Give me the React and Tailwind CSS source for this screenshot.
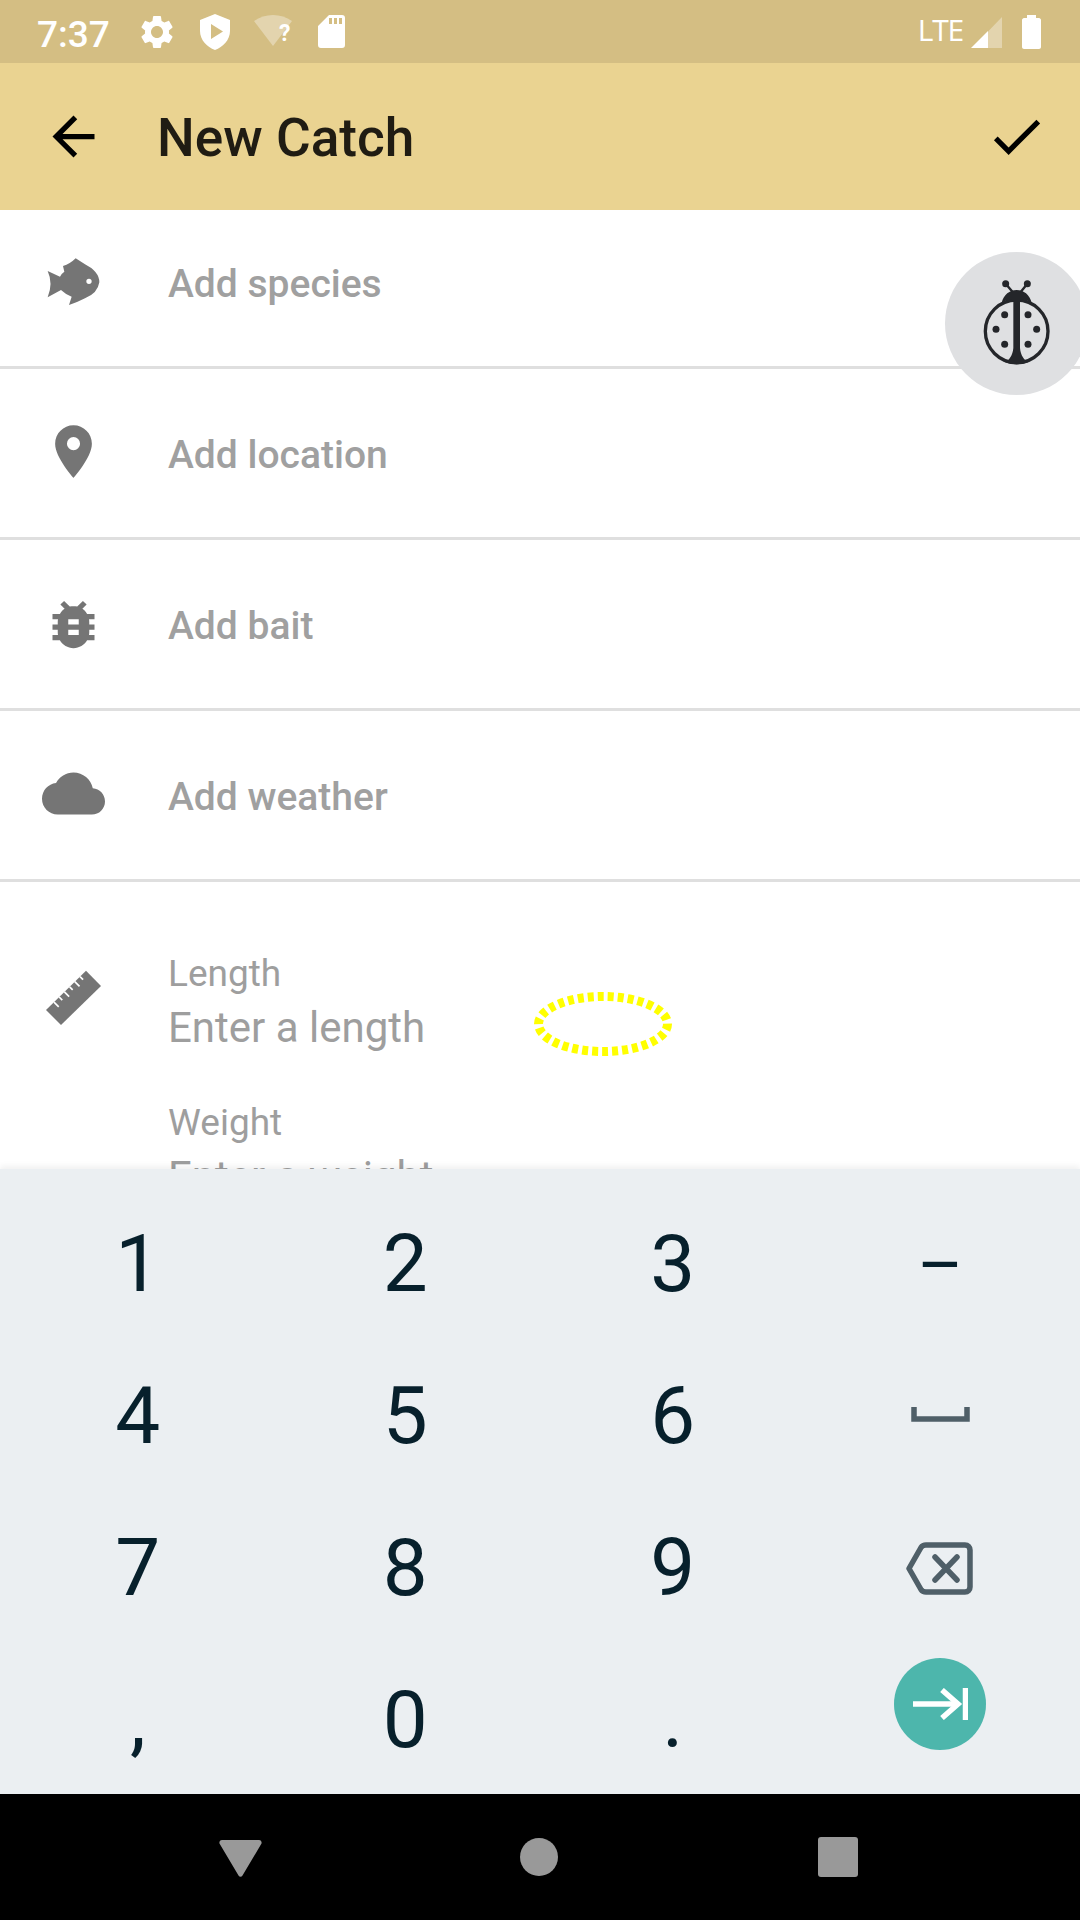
import React from "react";

const roboto = "font-['Roboto',sans-serif]";

function Gear() {
  return (
    <svg viewBox="0 0 24 24" className="w-[40px] h-[40px] ml-[-4px]" fill="#fff">
      <path d="M19.14 12.94c.04-.3.06-.61.06-.94 0-.32-.02-.64-.07-.94l2.03-1.58c.18-.14.23-.41.12-.61l-1.92-3.32c-.12-.22-.37-.29-.59-.22l-2.39.96c-.5-.38-1.03-.7-1.62-.94l-.36-2.54c-.04-.24-.24-.41-.48-.41h-3.84c-.24 0-.43.17-.47.41l-.36 2.54c-.59.24-1.13.57-1.62.94l-2.39-.96c-.22-.08-.47 0-.59.22L2.74 8.87c-.12.21-.08.47.12.61l2.03 1.58c-.05.3-.09.63-.09.94s.02.64.07.94l-2.03 1.58c-.18.14-.23.41-.12.61l1.92 3.32c.12.22.37.29.59.22l2.39-.96c.5.38 1.03.7 1.62.94l.36 2.54c.05.24.24.41.48.41h3.84c.24 0 .44-.17.47-.41l.36-2.54c.59-.24 1.13-.56 1.62-.94l2.39.96c.22.08.47 0 .59-.22l1.92-3.32c.12-.22.07-.47-.12-.61l-2.01-1.58zM12 15.6c-1.98 0-3.6-1.62-3.6-3.6s1.62-3.6 3.6-3.6 3.6 1.62 3.6 3.6-1.62 3.6-3.6 3.6z" />
    </svg>
  );
}

function Shield() {
  return (
    <svg viewBox="0 0 30 36" className="w-[30px] h-[36px]" fill="#fff">
      <path
        fillRule="evenodd"
        d="M15 0 L30 6 V17 C30 26 23 33 15 36 C7 33 0 26 0 17 V6 Z M11 10 V25 L23 17.5 Z"
      />
    </svg>
  );
}

function Wifi() {
  return (
    <div className="relative w-[40px] h-[34px]">
      <svg viewBox="0 0 40 34" className="w-[40px] h-[34px]" fill="#fff" fillOpacity="0.35">
        <path d="M0 7 C11 -1 27 -1 38 7 L19 32 Z" />
      </svg>
      <span className={`absolute left-[25px] top-[7px] text-[23px] leading-[26px] font-bold text-white ${roboto}`}>?</span>
    </div>
  );
}

function Sd() {
  return (
    <svg viewBox="0 0 27 33" className="w-[27px] h-[33px]" fill="#fff">
      <path
        fillRule="evenodd"
        d="M11 0 H24 C26 0 27 1 27 3 V30 C27 32 26 33 24 33 H3 C1 33 0 32 0 30 V11 Z M11 3 V9 H14 V3 Z M16 3 V9 H19 V3 Z M21 3 V9 H24 V3 Z"
      />
    </svg>
  );
}

function StatusBar() {
  return (
    <div className="h-[63px] shrink-0 bg-[#d4be83] flex items-center pl-[37px] pr-[39px] text-white">
      <span className={`text-[37px] font-medium leading-none w-[104px] mt-[6px] ${roboto}`}>7:37</span>
      <div className="flex items-center">
        <Gear />
        <div className="ml-[23px] mt-[1px]"><Shield /></div>
        <div className="ml-[24px] mt-[-1px]"><Wifi /></div>
        <div className="ml-[24px]"><Sd /></div>
      </div>
      <div className="ml-auto flex items-center">
        <span className="font-['Open_Sans',sans-serif] text-[30px] leading-none tracking-[-1.2px] mt-[-4px]">LTE</span>
        <svg viewBox="0 0 31 31" className="w-[31px] h-[31px] ml-[8px] mt-[1px]">
          <path d="M17 14.5 L31 0 V31 H17 Z" fill="#fff" fillOpacity="0.35" />
          <path d="M0 31 L17 14 V31 Z" fill="#fff" />
        </svg>
        <svg viewBox="0 0 19 34" className="w-[19px] h-[34px] ml-[20px]" fill="#fff">
          <path d="M5 0 H14 V3 H17 C18 3 19 4 19 5 V32 C19 33 18 34 17 34 H2 C1 34 0 33 0 32 V5 C0 4 1 3 2 3 H5 Z" />
        </svg>
      </div>
    </div>
  );
}

function Toolbar() {
  return (
    <div className="h-[147px] shrink-0 bg-[#ead391] flex items-center pl-[42px] pr-[32px]">
      <svg viewBox="0 0 24 24" className="w-[63px] h-[63px]" fill="#000">
        <path d="M20 11H7.83l5.59-5.59L12 4l-8 8 8 8 1.41-1.41L7.83 13H20v-2z" />
      </svg>
      <span className={`ml-[52px] mt-[5px] text-[53.2px] leading-none font-medium text-[#201c13] ${roboto}`}>New Catch</span>
      <svg viewBox="0 0 24 24" className="ml-auto w-[63px] h-[63px]" fill="#000">
        <path d="M9 16.17L4.83 12l-1.42 1.41L9 19 21 7l-1.41-1.41z" />
      </svg>
    </div>
  );
}

function Fish() {
  return (
    <svg viewBox="0 0 240 195" className="w-[80px] h-[65px]" fill="#757575">
      <path
        fillRule="evenodd"
        d="M38 63 L75 80 Q80 70 88 65 L84 48 Q105 42 122 25 L150 43 Q193 65 193 97 Q188 130 150 145 Q125 158 102 165 L110 140 Q90 132 78 120 L38 142 Q55 100 38 63 Z M162 86 A8 8 0 1 0 162 102 A8 8 0 1 0 162 86 Z"
      />
    </svg>
  );
}

function Pin() {
  return (
    <svg viewBox="0 0 24 24" className="w-[63px] h-[63px] mt-[-3px]" fill="#757575">
      <path d="M12 2C8.13 2 5 5.13 5 9c0 5.25 7 13 7 13s7-7.75 7-13c0-3.87-3.13-7-7-7zm0 9.5a2.5 2.5 0 0 1 0-5 2.5 2.5 0 0 1 0 5z" />
    </svg>
  );
}

function Bug() {
  return (
    <svg viewBox="0 0 24 24" className="w-[63px] h-[63px]" fill="#757575">
      <path d="M20 8h-2.81c-.45-.78-1.07-1.45-1.82-1.96L17 4.41 15.59 3l-2.17 2.17C12.96 5.06 12.49 5 12 5c-.49 0-.96.06-1.41.17L8.41 3 7 4.41l1.62 1.63C7.88 6.55 7.26 7.22 6.81 8H4v2h2.09c-.05.33-.09.66-.09 1v1H4v2h2v1c0 .34.04.67.09 1H4v2h2.81c1.04 1.79 2.97 3 5.19 3s4.15-1.21 5.19-3H20v-2h-2.09c.05-.33.09-.66.09-1v-1h2v-2h-2v-1c0-.34-.04-.67-.09-1H20V8zm-6 8h-4v-2h4v2zm0-4h-4v-2h4v2z" />
    </svg>
  );
}

function Cloud() {
  return (
    <svg viewBox="0 0 24 24" className="w-[63px] h-[63px] mt-[-3px]" fill="#757575">
      <path d="M19.35 10.04C18.67 6.59 15.64 4 12 4 9.11 4 6.6 5.64 5.35 8.04 2.34 8.36 0 10.91 0 14c0 3.31 2.69 6 6 6h13c2.76 0 5-2.24 5-5 0-2.64-2.05-4.78-4.65-4.96z" />
    </svg>
  );
}

function Ruler() {
  const ticks = [
    [0.2, 20],
    [0.33, 13],
    [0.46, 20],
    [0.59, 13],
    [0.72, 20],
    [0.85, 13],
  ];
  return (
    <svg viewBox="0 0 225 225" className="w-[75px] h-[75px]">
      <path d="M150 32 L195 78 L75 195 L30 150 Z" fill="#757575" />
      {ticks.map(([t, l], i) => {
        const x = 30 + 120 * t;
        const y = 150 - 118 * t;
        return <line key={i} x1={x} y1={y} x2={x + l * 0.71} y2={y + l * 0.71} stroke="#fff" strokeWidth="5" />;
      })}
    </svg>
  );
}

function Row({ icon, label, first }) {
  return (
    <div className={`${first ? "h-[159px] pb-[12px]" : "h-[171px]"} shrink-0 border-b-[3px] border-[#dfdfdf] flex items-center relative`}>
      <div className="w-[147px] shrink-0 flex items-center justify-center mr-[21px]">{icon}</div>
      <span className={`text-[39px] leading-none mt-[4px] font-medium text-[#a0a0a0] ${roboto}`}>{label}</span>
    </div>
  );
}

function Field({ label, placeholder }) {
  return (
    <div className="flex flex-col">
      <span className={`text-[37px] leading-[40px] text-[#9e9e9e] ${roboto}`}>{label}</span>
      <span className={`text-[42px] leading-[52px] mt-[8px] text-[#9e9e9e] ${roboto}`}>{placeholder}</span>
    </div>
  );
}

function Form() {
  return (
    <div className="relative flex-1 min-h-0 overflow-hidden bg-white">
      <Row first icon={<div className="mt-[1px] ml-[2px]"><Fish /></div>} label="Add species" />
      <Row icon={<Pin />} label="Add location" />
      <Row icon={<Bug />} label="Add bait" />
      <Row icon={<Cloud />} label="Add weather" />
      <div className="flex pt-[72px]">
        <div className="w-[147px] shrink-0 mr-[21px] flex justify-center pt-[6px]">
          <div className="h-[75px]"><Ruler /></div>
        </div>
        <div className="flex flex-col gap-[49px]">
          <Field label="Length" placeholder="Enter a length" />
          <Field label="Weight" placeholder="Enter a weight" />
        </div>
      </div>
      <svg viewBox="0 0 150 70" className="absolute left-[528px] top-[779px] w-[150px] h-[70px]">
        <ellipse cx="75" cy="35" rx="64.5" ry="27.5" fill="none" stroke="#ffff00" strokeWidth="9" strokeDasharray="6 4" />
      </svg>
    </div>
  );
}

function Key({ children }) {
  return (
    <div className={`h-[152px] flex items-center justify-center text-[80px] leading-none text-[#07202c] ${roboto}`}>
      {children}
    </div>
  );
}

function Keyboard() {
  return (
    <div className="relative h-[625px] shrink-0 bg-[#ebeff2] shadow-[0_-3px_6px_rgba(0,0,0,0.06)] pt-[19px] pl-[4px] pr-[6px]">
      <div className="grid grid-cols-4">
        <Key>1</Key>
        <Key>2</Key>
        <Key>3</Key>
        <Key><span className="text-[70px] mt-[2px]">–</span></Key>
        <Key>4</Key>
        <Key>5</Key>
        <Key>6</Key>
        <Key>
          <svg viewBox="0 0 59 15" className="w-[59px] h-[15px] mt-[-4px]" fill="none" stroke="#4f5f68" strokeWidth="5.5">
            <path d="M3 0 V12 H56 V0" />
          </svg>
        </Key>
        <Key>7</Key>
        <Key>8</Key>
        <Key>9</Key>
        <Key>
          <svg viewBox="0 0 67 53" className="w-[67px] h-[53px] ml-[-2px]" fill="none" stroke="#4f5f68" strokeWidth="5.5" strokeLinejoin="round" strokeLinecap="round">
            <path d="M20 3 H59 C62 3 64 5 64 8 V45 C64 48 62 50 59 50 H20 C17 50 16 49 15 47.5 L3 26.5 L15 5.5 C16 4 17 3 20 3 Z" />
            <path d="M29 15 L51 38 M51 15 L29 38" />
          </svg>
        </Key>
        <Key>,</Key>
        <Key>0</Key>
        <Key>.</Key>
        <Key>
          <div className="w-[92px] h-[92px] rounded-full bg-[#4db6ac] flex items-center justify-center mt-[-32px]">
            <svg viewBox="0 0 55 32" className="w-[55px] h-[32px]" fill="none" stroke="#fff" strokeWidth="5.5">
              <path d="M0 16 H44" />
              <path d="M29 2 L45 16 L29 30" />
              <path d="M52.5 0 V32" />
            </svg>
          </div>
        </Key>
      </div>
    </div>
  );
}

function NavBar() {
  return (
    <div className="h-[126px] shrink-0 bg-black flex items-center">
      <div className="w-[541px] flex justify-end pr-[279px]">
        <svg viewBox="0 0 43 37" className="w-[43px] h-[37px] mt-[2px]" fill="#999">
          <path d="M3 0 H40 C42 0 43 2 42.5 3.5 L23.5 35.5 C22.5 37.2 20.5 37.2 19.5 35.5 L0.5 3.5 C0 2 1 0 3 0 Z" />
        </svg>
      </div>
      <div className="w-[38px] h-[38px] rounded-full bg-[#999] ml-[-21px]" />
      <div className="w-[40px] h-[40px] rounded-[3px] bg-[#999] ml-[260px]" />
    </div>
  );
}

export default function App() {
  return (
    <div className="relative w-[1080px] h-[1920px] overflow-hidden flex flex-col bg-white">
      <StatusBar />
      <Toolbar />
      <Form />
      <Keyboard />
      <NavBar />
      <div className="absolute left-[945px] top-[252px] w-[143px] h-[143px] rounded-full bg-[#dfe0e2] flex items-center justify-center">
        <svg viewBox="0 0 300 315" className="w-[100px] h-[105px] ml-[7px] mt-[-7px]" fill="#24262a">
          <circle cx="140" cy="190" r="94" fill="none" stroke="#24262a" strokeWidth="10" />
          <path d="M95 105 C100 80 120 66 140 66 C160 66 180 80 185 105 C170 95 155 92 150 100 L150 240 C152 262 162 276 175 283 C150 292 130 292 105 283 C118 276 128 262 130 240 L130 100 C125 92 110 95 95 105 Z" />
          <path d="M128 72 L107 47 M152 72 L172 47" stroke="#24262a" strokeWidth="7" fill="none" />
          <circle cx="107" cy="47" r="10.5" />
          <circle cx="172" cy="47" r="10.5" />
          <circle cx="104" cy="140" r="10.5" />
          <circle cx="174" cy="140" r="10.5" />
          <circle cx="78" cy="184" r="10.5" />
          <circle cx="200" cy="184" r="10.5" />
          <circle cx="104" cy="229" r="10.5" />
          <circle cx="174" cy="229" r="10.5" />
        </svg>
      </div>
    </div>
  );
}
